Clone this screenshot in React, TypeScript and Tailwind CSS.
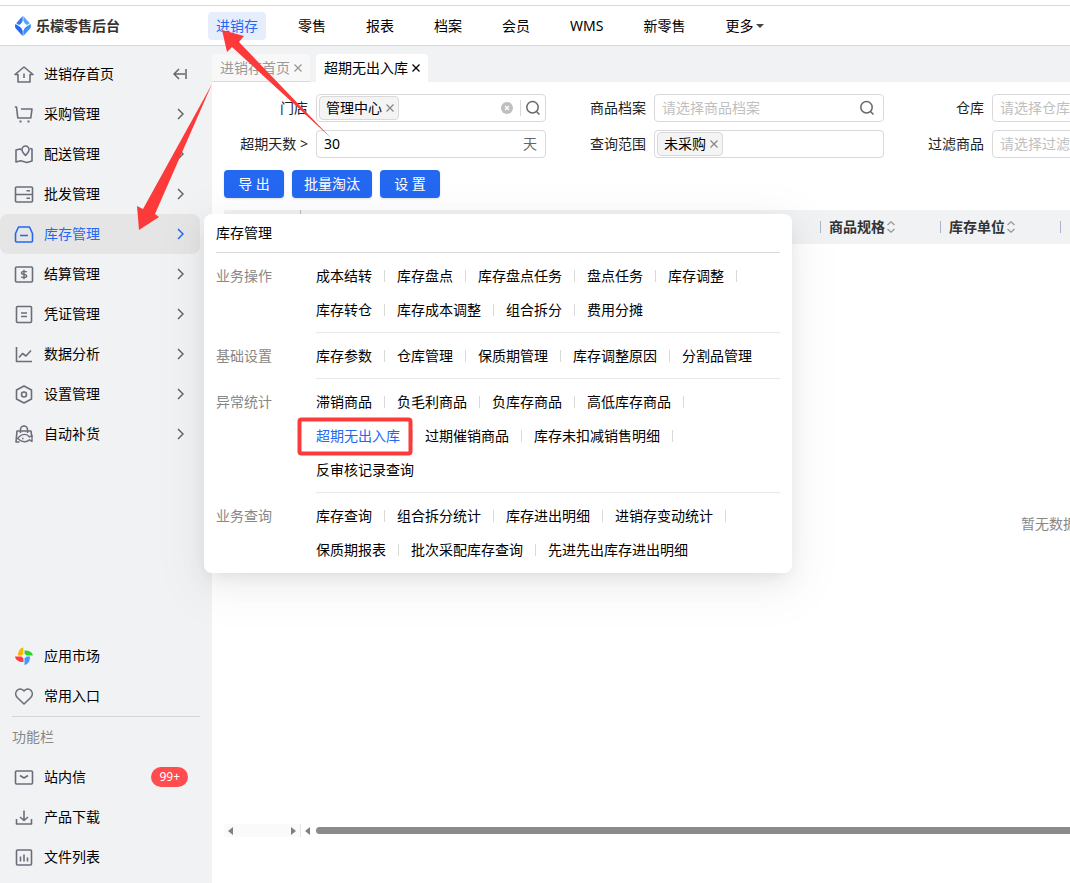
import { ReactNode } from "react";
import clsx from "clsx";

const navItems = ["进销存", "零售", "报表", "档案", "会员", "WMS", "新零售"];

const stroke = {
	fill: "none",
	stroke: "currentColor",
	strokeWidth: 1.6,
	strokeLinejoin: "round" as const,
};

function Icon({ children }: { children: ReactNode }) {
	return (
		<svg width="20" height="20" viewBox="0 0 20 20" aria-hidden="true" {...stroke}>
			{children}
		</svg>
	);
}

const menuItems = [
	{
		name: "进销存首页",
		icon: <path d="M1 10.5 10 3l9 7.500H16V18H4v-7.500ZM10 9.500v4.500" />,
	},
	{
		name: "采购管理",
		icon: (
			<>
				<path d="M.800 3h1.700l1.300 11h13L18 5H7" />
				<path d="M6.500 16.500v2M14.500 16.500v2" strokeWidth="2" />
			</>
		),
	},
	{
		name: "配送管理",
		icon: (
			<>
				<path d="M7.500 5.800 6 5 2 6v12l4.500-1.200L13 18.500l5-1.500V5l-2-.500" />
				<path d="M11.500 11.500C9 9 8 7.500 8 5.500a3.500 3.500 0 0 1 7 0c0 2-1 3.500-3.500 6Z" />
			</>
		),
	},
	{
		name: "批发管理",
		icon: (
			<path d="M2.500 3h15a1 1 0 0 1 1 1v13a1 1 0 0 1-1 1h-15a1 1 0 0 1-1-1V4a1 1 0 0 1 1-1ZM1.500 10.500h17M12.500 6.800H16M12.500 14.200H16" />
		),
	},
	{
		name: "库存管理",
		icon: (
			<path d="M4.500 3h11l3 6.500V17a1 1 0 0 1-1 1h-15a1 1 0 0 1-1-1V9.500L4.500 3ZM6 11.500h8" />
		),
	},
	{
		name: "结算管理",
		icon: (
			<>
				<rect x="1.500" y="3" width="17" height="15" rx="1" />
				<path d="M12.800 8.200C12 7 7.500 6.900 7.500 9s5.200 1 5.200 3-4.500 2-5.500.600M10 5.800v9.400" strokeWidth="1.400" />
			</>
		),
	},
	{
		name: "凭证管理",
		icon: (
			<>
				<rect x="2.500" y="2.500" width="15" height="16" rx="1" />
				<path d="M7 9h6M7 12.500h6" />
			</>
		),
	},
	{
		name: "数据分析",
		icon: <path d="M2.500 3v14.500H18M5 13.500l3.500-4 3.500 2.500 5-5.500" />,
	},
	{
		name: "设置管理",
		icon: (
			<>
				<path d="m10 2 7.500 4v9L10 19l-7.500-4V6L10 2Z" />
				<circle cx="10" cy="10.500" r="2.500" />
			</>
		),
	},
	{
		name: "自动补货",
		icon: (
			<>
				<path d="M5.500 18H2l1-11h14l.800 6M6.500 9V5.500a3.500 3.500 0 0 1 7 0V9" />
				<path d="M5 13c3-3.500 8-3.500 10.500 0L18 11.500v6l-2.500-1.700C13 18.500 8 18.500 5 15.500l-1.500-1L5 13Z" strokeWidth="1.400" />
				<path d="M8 14.500h1.500" />
			</>
		),
	},
];

const toolItems = [
	{
		name: "站内信",
		badge: "99+",
		icon: (
			<>
				<rect x="1.500" y="4" width="17" height="13" rx="1" />
				<path d="m6 8.500 4 2.500 4-2.500" />
			</>
		),
	},
	{
		name: "产品下载",
		icon: <path d="M10 3.500v9.500M6 10l4 3.500 4-3.500M2.500 12v5h15v-5" />,
	},
	{
		name: "文件列表",
		icon: (
			<>
				<rect x="2.500" y="3" width="15" height="15" rx="1" />
				<path d="M6.500 9.500v5M10 7.500v7M13.500 10.500v4" />
			</>
		),
	},
];

const sections = [
	{
		name: "业务操作",
		links: ["成本结转", "库存盘点", "库存盘点任务", "盘点任务", "库存调整", "库存转仓", "库存成本调整", "组合拆分", "费用分摊"],
	},
	{
		name: "基础设置",
		links: ["库存参数", "仓库管理", "保质期管理", "库存调整原因", "分割品管理"],
	},
	{
		name: "异常统计",
		links: ["滞销商品", "负毛利商品", "负库存商品", "高低库存商品", "超期无出入库", "过期催销商品", "库存未扣减销售明细", "反审核记录查询"],
	},
	{
		name: "业务查询",
		links: ["库存查询", "组合拆分统计", "库存进出明细", "进销存变动统计", "保质期报表", "批次采配库存查询", "先进先出库存进出明细"],
	},
];

function Cross() {
	return (
		<svg width="8" height="8" viewBox="0 0 8 8" aria-hidden="true">
			<path d="m.500.500 7 7m0-7-7 7" stroke="currentColor" strokeWidth="1.300" />
		</svg>
	);
}

function SearchIcon() {
	return (
		<svg width="16" height="16" viewBox="0 0 16 16" fill="none" stroke="#666" strokeWidth="1.500" aria-hidden="true">
			<circle cx="7.500" cy="7.300" r="5.700" />
			<path d="m11.500 11.500 3 3" />
		</svg>
	);
}

function Header() {
	return (
		<header className="flex h-[41px] shrink-0 items-center border-y border-[#d9d9d9] bg-white">
			<a href="#" className="flex w-[208px] shrink-0 items-center gap-1 pl-[14px] text-[14px] font-bold text-[#333]">
				<svg width="18" height="20" viewBox="0 0 18 20" aria-hidden="true">
					<path d="M8.700 0v4.500C8 6.500 6.800 8 5 9L2.200 7.200Z" fill="#2f7bf5" />
					<path d="M9.300 0v4.500c.700 2 1.900 3.500 3.700 4.500l2.800-1.800Z" fill="#5aa5fb" />
					<path d="m1.500 8 3.200 2c2 1.100 3.300 2.800 4 5v5L1.800 12.500C.800 11 .800 9.500 1.500 8Z" fill="#2468f2" />
					<path d="m16.500 8-3.200 2c-2 1.100-3.300 2.800-4 5v5l6.900-7.500c1-1.500 1-3 .300-4.500Z" fill="#3f8ff8" />
				</svg>
				乐檬零售后台
			</a>
			<nav className="flex gap-6 pt-[1px]">
				{navItems.map((item, i) => (
					<a
						key={item}
						href="#"
						className={clsx(
							"h-7 shrink-0 rounded px-2 leading-7",
							i === 0 && "bg-[#e6edfd] text-[#2468f2]"
						)}
					>
						{item}
					</a>
				))}
				<button className="flex h-7 shrink-0 items-center gap-[3px] px-2">
					更多
					<svg width="8" height="4" viewBox="0 0 8 4" aria-hidden="true">
						<path d="M0 0h8L4 4Z" fill="#444" />
					</svg>
				</button>
			</nav>
		</header>
	);
}

function MenuRow({ name, icon, badge, arrow, active }: { name: string; icon: ReactNode; badge?: string; arrow?: ReactNode; active?: boolean }) {
	return (
		<li>
			<a
				href="#"
				className={clsx(
					"mr-3 flex h-10 items-center gap-[10px] rounded-lg pl-[14px]",
					active ? "bg-[#e5e5e5] text-[#2468f2]" : "text-black"
				)}
			>
				<span className={active ? "text-[#2468f2]" : "text-[#6b6e7a]"}>{icon}</span>
				<span className="flex-1">{name}</span>
				{badge && (
					<span className="mr-3 h-5 rounded-full bg-[#ff4d4f] px-2 text-[12px] leading-5 text-white">
						{badge}
					</span>
				)}
				{arrow}
			</a>
		</li>
	);
}

function Sidebar() {
	return (
		<aside className="flex w-[212px] shrink-0 flex-col justify-between bg-[#f1f2f4] pt-2 pb-[6px]">
			<ul>
				{menuItems.map(({ name, icon }, i) => (
					<MenuRow
						key={name}
						name={name}
						icon={<Icon>{icon}</Icon>}
						active={name === "库存管理"}
						arrow={
							i === 0 ? (
								<svg width="14" height="12" viewBox="0 0 14 12" className="mr-[13px]" fill="none" stroke="#666" strokeWidth="1.500" aria-hidden="true">
									<path d="M6 1 1 6l5 5M1 6h11M13 1v10" />
								</svg>
							) : (
								<svg width="7" height="12" viewBox="0 0 7 12" className="mr-4" fill="none" stroke={name === "库存管理" ? "#2468f2" : "#666"} strokeWidth="1.500" aria-hidden="true">
									<path d="m1 1 5 5-5 5" />
								</svg>
							)
						}
					/>
				))}
			</ul>
			<div>
				<ul>
					<MenuRow
						name="应用市场"
						icon={
							<svg width="20" height="20" viewBox="0 0 20 20" aria-hidden="true">
								<path d="M9.300 1.500v6.800L7 9.500H4C4 5 6 2 9.300 1.500Z" fill="#ffb400" />
								<path d="M10.500 4.500c5 0 7.800 1.500 8.300 5h-6.300l-2-2Z" fill="#2bd32b" />
								<path d="M1 10.500h6.500l2 2V16C4.500 16 1.500 14 1 10.500Z" fill="#ff3b3b" />
								<path d="M12.500 10.500H16c0 5-2 7.800-5.500 8.500v-6.500Z" fill="#3d9bff" />
							</svg>
						}
					/>
					<MenuRow
						name="常用入口"
						icon={
							<Icon>
								<path d="M10 5C8 2.500 5 2.500 3.200 4.300c-2 2-2 5 0 7.200L10 18l6.800-6.500c2-2.200 2-5.200 0-7.200C15 2.500 12 2.500 10 5Z" />
							</Icon>
						}
					/>
				</ul>
				<h2 className="mx-3 border-t border-[#d4d5d8] text-[#888] leading-10">功能栏</h2>
				<ul>
					{toolItems.map(({ name, icon, badge }) => (
						<MenuRow key={name} name={name} badge={badge} icon={<Icon>{icon}</Icon>} />
					))}
				</ul>
			</div>
		</aside>
	);
}

function Tabs() {
	return (
		<div className="flex h-9 shrink-0 items-end gap-[6px] bg-[#f1f2f4]">
			<div className="flex h-7 items-center gap-1 rounded-t border-b border-[#d9d9d9] bg-[#f8f8f9] px-2 text-[#999]">
				<a href="#">进销存首页</a>
				<button aria-label="关闭进销存首页">
					<Cross />
				</button>
			</div>
			<div className="flex h-7 items-center gap-1 rounded-t bg-white px-2">
				<a href="#">超期无出入库</a>
				<button aria-label="关闭超期无出入库">
					<Cross />
				</button>
			</div>
		</div>
	);
}

function Tag({ text }: { text: string }) {
	return (
		<span className="flex h-6 shrink-0 items-center gap-1 rounded border border-[#d9d9d9] bg-[#f4f4f5] pr-1 pl-[6px]">
			{text}
			<button type="button" aria-label={`移除${text}`} className="text-[#888]">
				<Cross />
			</button>
		</span>
	);
}

function Field({ id, label, tag, placeholder, value, suffix }: { id: string; label: string; tag?: string; placeholder?: string; value?: string; suffix?: ReactNode }) {
	return (
		<div className="flex w-[310px] items-center gap-2">
			<label htmlFor={id} className="w-[72px] shrink-0 text-right text-[#222]">
				{label}
			</label>
			<div className="flex h-7 min-w-0 flex-1 items-center rounded border border-[#d9d9d9] bg-white pr-1 pl-[2px]">
				{tag && <Tag text={tag} />}
				<input
					id={id}
					defaultValue={value}
					placeholder={placeholder}
					className="min-w-0 flex-1 bg-transparent pl-[5px] outline-none placeholder:text-[#bfbfbf]"
				/>
				{suffix}
			</div>
		</div>
	);
}

function Filters() {
	return (
		<form className="px-3 pt-3">
			<div className="grid grid-cols-[repeat(4,310px)] gap-x-7 gap-y-2 pl-3">
				<Field
					id="store"
					label="门店"
					tag="管理中心"
					suffix={
						<>
							<button type="button" aria-label="清除" className="mr-[7px]">
								<svg width="12" height="12" viewBox="0 0 12 12" className="block">
									<circle cx="6" cy="6" r="6" fill="#bfbfbf" />
									<path d="m4 4 4 4m0-4-4 4" stroke="#fff" strokeWidth="1.400" />
								</svg>
							</button>
							<span className="mr-1 h-4 w-px bg-[#d9d9d9]" />
							<SearchIcon />
						</>
					}
				/>
				<Field
					id="goods"
					label="商品档案"
					placeholder="请选择商品档案"
					suffix={
						<span className="mr-1">
							<SearchIcon />
						</span>
					}
				/>
				<Field id="warehouse" label="仓库" placeholder="请选择仓库" />
				<span />
				<Field id="days" label="超期天数 &gt;" value="30" suffix={<span className="mr-1 text-[#666]">天</span>} />
				<Field id="scope" label="查询范围" tag="未采购" />
				<Field id="filter" label="过滤商品" placeholder="请选择过滤商品" />
			</div>
			<div className="flex gap-2 py-3 text-white">
				<button type="button" className="h-7 w-[60px] rounded bg-[#2468f2] shadow-sm">
					导 出
				</button>
				<button type="button" className="h-7 w-20 rounded bg-[#2468f2] shadow-sm">
					批量淘汰
				</button>
				<button type="button" className="h-7 w-[60px] rounded bg-[#2468f2] shadow-sm">
					设 置
				</button>
			</div>
		</form>
	);
}

function HeadCell({ text }: { text: string }) {
	return (
		<th className="p-0 text-left font-bold text-[#333]">
			<span className="flex h-3 items-center gap-[2px] border-l border-[#a9b4cc] pl-2">
				{text}
				{text && (
					<svg width="8" height="12" viewBox="0 0 8 12" fill="none" stroke="#999" strokeWidth="1.300" aria-hidden="true">
						<path d="m.500 4L4 .800 7.500 4M.500 8 4 11.200 7.500 8" />
					</svg>
				)}
			</span>
		</th>
	);
}

function Results() {
	return (
		<div className="flex min-h-0 flex-1 flex-col px-3 pb-[46px]">
			<table className="w-full table-fixed">
				<colgroup>
					<col className="w-[76px]" />
					<col className="w-[520px]" />
					<col className="w-[120px]" />
					<col className="w-[120px]" />
					<col />
				</colgroup>
				<thead>
					<tr className="h-[34px] bg-[#f0f2f4]">
						<th className="border-r border-[#bbb]" />
						<th />
						<HeadCell text="商品规格" />
						<HeadCell text="库存单位" />
						<HeadCell text="" />
					</tr>
				</thead>
			</table>
			<div className="flex flex-1 items-center justify-center pb-5 text-[#888]">暂无数据</div>
			<div className="flex h-[13px] items-center">
				<div className="flex h-[13px] w-[77px] items-center justify-between border-r border-[#e5e5e5] bg-[#fafafa] px-1">
					<svg width="5" height="8" viewBox="0 0 5 8" aria-hidden="true">
						<path d="M5 0v8L0 4Z" fill="#808080" />
					</svg>
					<svg width="5" height="8" viewBox="0 0 5 8" aria-hidden="true">
						<path d="M0 0v8l5-4Z" fill="#808080" />
					</svg>
				</div>
				<svg width="5" height="8" viewBox="0 0 5 8" className="mr-[6px] ml-1" aria-hidden="true">
					<path d="M5 0v8L0 4Z" fill="#808080" />
				</svg>
				<div className="h-[7px] flex-1 rounded-full bg-[#8b8b8b]" />
			</div>
		</div>
	);
}

function MegaMenu() {
	return (
		<div className="absolute top-[214px] left-[204px] w-[588px] rounded-lg bg-white px-3 pb-[6px] shadow-[0_12px_48px_16px_rgba(0,0,0,0.03),0_9px_28px_0_rgba(0,0,0,0.06),0_6px_16px_-8px_rgba(0,0,0,0.1)]">
			<h3 className="border-b border-[#d9d9d9] leading-[38px]">库存管理</h3>
			{sections.map(({ name, links }, i) => (
				<section key={name} className="flex pt-[6px] leading-[34px]">
					<h4 className="w-[100px] shrink-0 text-[#888]">{name}</h4>
					<ul
						className={clsx(
							"flex flex-1 flex-wrap",
							i < sections.length - 1 && "border-b border-[#e8e8e8] pb-[5px]"
						)}
					>
						{links.map((link, j) => (
							<li key={link} className="flex items-center">
								<a href="#" className={clsx(link === "超期无出入库" && "text-[#2468f2]")}>
									{link}
								</a>
								{j < links.length - 1 && <span className="mx-3 h-3 w-px bg-[#d9d9d9]" />}
							</li>
						))}
					</ul>
				</section>
			))}
		</div>
	);
}

// red pointers and frame that guide the reader through the menu
function Annotations() {
	return (
		<svg width="430" height="470" viewBox="0 0 430 470" className="pointer-events-none absolute top-0 left-0" aria-hidden="true">
			<path d="M222 30 244 36 239 42 331 138 232 47 227 52Z" fill="#fd3a3a" />
			<path d="M212 84 155 214 159 217 139 230 137 206 143 209Z" fill="#fd3a3a" />
			<rect x="299.500" y="419.500" width="111" height="34" rx="2" fill="none" stroke="#fd3a3a" strokeWidth="4" />
		</svg>
	);
}

export default function App() {
	return (
		<div className="relative flex h-screen flex-col overflow-hidden bg-white pt-[5px] font-['Noto_Sans','Noto_Sans_CJK_SC',sans-serif] text-[14px] leading-5 text-black">
			<Header />
			<div className="flex min-h-0 flex-1">
				<Sidebar />
				<main className="flex min-w-[1674px] flex-1 flex-col">
					<Tabs />
					<Filters />
					<Results />
				</main>
			</div>
			<MegaMenu />
			<Annotations />
		</div>
	);
}
